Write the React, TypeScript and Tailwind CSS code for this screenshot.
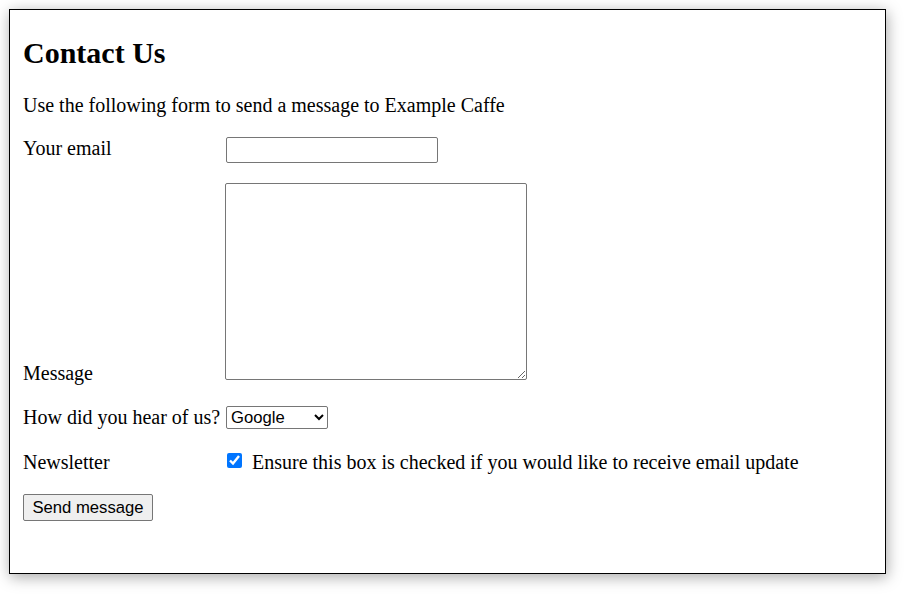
const App = () => {
  return (
    <div className="min-h-[601px] bg-white pt-[9px] pl-[9px]">
      <div className="w-[877px] h-[565px] border border-black bg-white shadow-[1px_3px_14px_rgba(0,0,0,0.35)] pt-[26px] pl-[13px] font-['Liberation_Serif',serif] text-[20px] text-black">
        <h2 className="text-[30px] leading-[34px] font-bold">Contact Us</h2>
        <p className="mt-[24px] leading-[23px]">
          Use the following form to send a message to Example Caffe
        </p>

        <form onSubmit={(e) => e.preventDefault()}>
          {/* email */}
          <div className="mt-[20px] flex items-start h-[26px]">
            <label className="w-[203px] leading-[22px]">Your email</label>
            <input
              type="email"
              className="w-[212px] h-[26px] border border-[#767676] rounded-[2px] px-[3px] text-[16.67px] font-['Liberation_Sans',sans-serif]"
            />
          </div>

          {/* message */}
          <div className="mt-[20px] flex items-end">
            <label className="w-[202px] leading-[13.5px]">Message</label>
            <textarea className="w-[302px] h-[197px] border border-[#767676] rounded-[2px] p-[3px] text-[16.67px] font-['Liberation_Mono',monospace]" />
          </div>

          {/* source */}
          <div className="mt-[26px] flex items-center h-[23px]">
            <label className="w-[203px] leading-[23px]">How did you hear of us?</label>
            <select
              defaultValue="Google"
              className="w-[102px] h-[23px] border border-[#767676] rounded-[2px] text-[16.67px] font-['Liberation_Sans',sans-serif] bg-white"
            >
              <option>Google</option>
              <option>Friend</option>
              <option>Other</option>
            </select>
          </div>

          {/* newsletter */}
          <div className="mt-[22px] flex items-start">
            <label className="w-[204px] leading-[23px]">Newsletter</label>
            <input
              type="checkbox"
              defaultChecked
              className="mt-[2px] w-[15px] h-[15px] m-0 accent-[#0075ff]"
            />
            <span className="ml-[10px] leading-[23px]">
              Ensure this box is checked if you would like to receive email update
            </span>
          </div>

          <button
            type="submit"
            className="mt-[20px] w-[130px] h-[27px] pt-[2px] border border-[#767676] rounded-[2px] bg-[#efefef] text-[16.67px] font-['Liberation_Sans',sans-serif] leading-none"
          >
            Send message
          </button>
        </form>
      </div>
    </div>
  );
};

export default App;
